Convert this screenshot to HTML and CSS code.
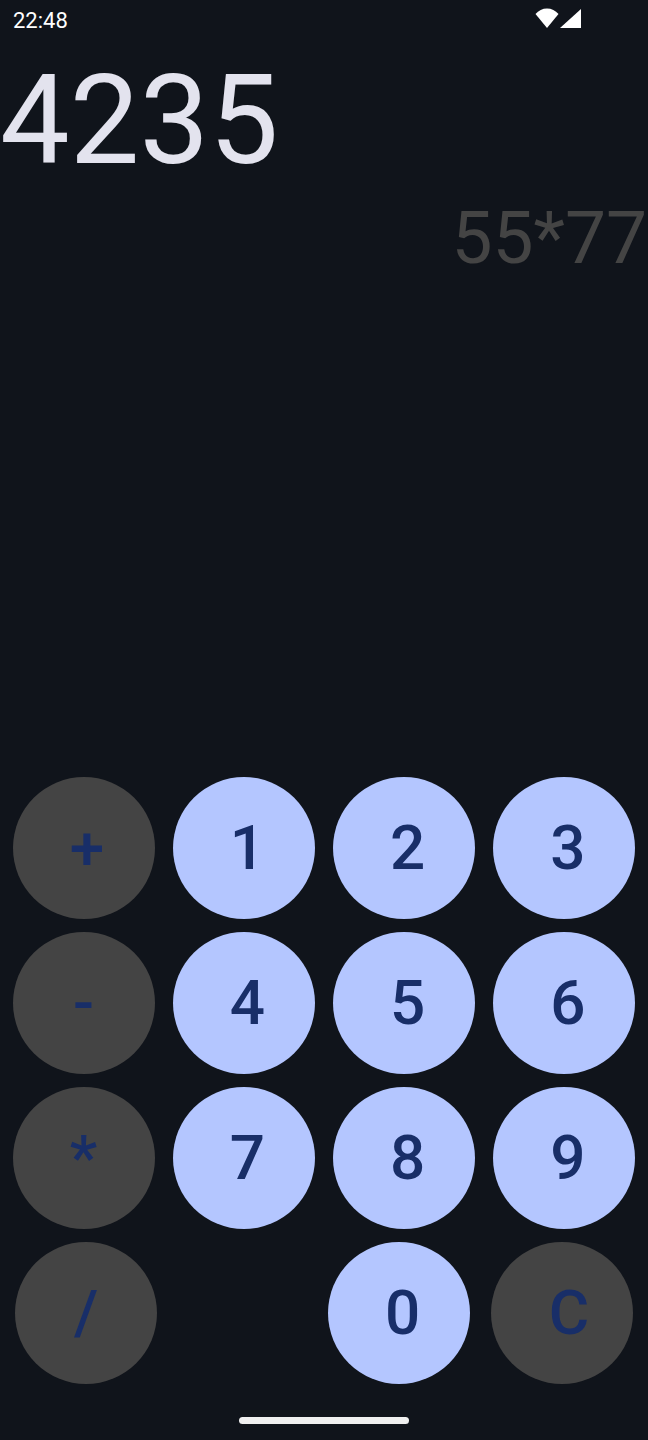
FILE: index.html
```html
<!DOCTYPE html>
<html>
<head>
  <title>Calculator</title>
  <link rel="stylesheet" href="styles.css">
</head>
<body>
  <div class="status-bar">
    <span class="clock">22:48</span>
    <div class="status-icons">
      <svg class="wifi" width="24" height="20" viewBox="0 0 24 20"><path d="M0.500 6C3.500 2.500 7.500 0.500 12 0.500s8.500 2 11.500 5.500L12 20z" fill="#fff"/></svg>
      <svg class="signal" width="21" height="20" viewBox="0 0 21 20"><path d="M0 20L21 1V20z" fill="#fff"/></svg>
    </div>
  </div>

  <div class="result">4235</div>
  <div class="expression">55*77</div>

  <div class="keypad">
    <div class="key-row">
      <button class="key op">+</button>
      <button class="key">1</button>
      <button class="key">2</button>
      <button class="key">3</button>
    </div>
    <div class="key-row">
      <button class="key op narrow">-</button>
      <button class="key">4</button>
      <button class="key">5</button>
      <button class="key">6</button>
    </div>
    <div class="key-row">
      <button class="key op narrow">*</button>
      <button class="key">7</button>
      <button class="key">8</button>
      <button class="key">9</button>
    </div>
    <div class="key-row last-row">
      <button class="key op narrow">/</button>
      <div class="key-spacer"></div>
      <button class="key">0</button>
      <button class="key op clear">C</button>
    </div>
  </div>

  <div class="nav-bar"><div class="nav-handle"></div></div>
</body>
</html>
```

FILE: styles.css
```css
* {
  box-sizing: border-box;
}
html, body {
  height: 100%;
}
body {
  margin: 0;
  height: 1440px;
  display: flex;
  flex-direction: column;
  overflow: hidden;
  background-color: #10141b;
  font-family: Roboto, sans-serif;
}
.status-bar {
  height: 40px;
  flex: none;
  padding: 0 67px 0 13px;
  display: flex;
  justify-content: space-between;
  align-items: center;
}
.clock {
  color: #fff;
  font-size: 22px;
}
.status-icons {
  display: flex;
  align-items: center;
  gap: 1px;
  margin-bottom: 4px;
}
.result {
  height: 150px;
  flex: none;
  color: #e3e3ee;
  font-size: 124px;
  line-height: 162px;
}
.expression {
  flex: none;
  padding-right: 1px;
  text-align: right;
  color: #444444;
  font-size: 73px;
  line-height: 96px;
}
.keypad {
  margin-top: auto;
  display: flex;
  flex-direction: column;
  gap: 13px;
}
.key-row {
  display: flex;
  gap: 18.300px;
  padding-left: 12.500px;
}
.key {
  width: 142px;
  height: 142px;
  flex: none;
  padding: 0 0 2px 7px;
  border: none;
  border-radius: 50%;
  background-color: #b4c6ff;
  color: #182e68;
  font-family: Roboto, sans-serif;
  font-size: 62px;
  font-weight: 500;
}
.key.op {
  background-color: #444444;
}
.key.narrow {
  padding-left: 0;
}
.key.clear {
  padding-left: 14px;
}
.last-row {
  gap: 21px;
  padding-left: 15px;
}
.key-spacer {
  width: 129px;
  flex: none;
}
.nav-bar {
  height: 56px;
  flex: none;
  display: flex;
  justify-content: center;
  padding-top: 33px;
}
.nav-handle {
  width: 170px;
  height: 7px;
  border-radius: 4px;
  background-color: #f0f0f0;
}
```
